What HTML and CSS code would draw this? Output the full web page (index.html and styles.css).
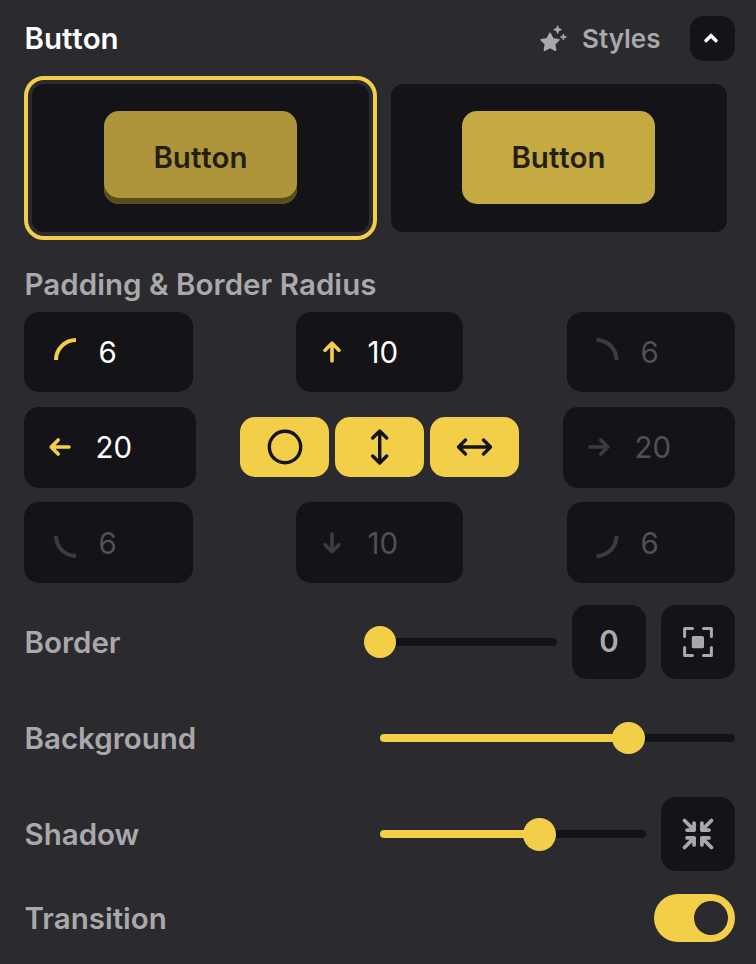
FILE: index.html
```html
<!DOCTYPE html>
<html lang="en">
<head>
<meta charset="utf-8">
<title>Button</title>
<link rel="stylesheet" href="styles.css">
</head>
<body>
<main class="panel">
  <header class="header">
    <h1 class="title">Button</h1>
    <div class="styles-link">
      <svg class="star" width="30" height="30" viewBox="0 0 30 30" fill="currentColor">
        <path d="M12 9.600l2.700 5.400 6 .9-4.300 4.200 1 6-5.400-2.900-5.400 2.900 1-6L3.300 15.900l6-.9z" stroke="currentColor" stroke-width="2" stroke-linejoin="round"/>
        <path d="M19.600 1.600l1.100 2.900 2.900 1.100-2.900 1.100-1.100 2.900-1.100-2.900-2.900-1.100 2.900-1.100zM25.400 10l.800 2.200 2.200 .800-2.200 .800-.800 2.200-.800-2.200-2.200-.800 2.200-.800z" stroke="currentColor" stroke-width=".8"/>
      </svg>
      <span>Styles</span>
    </div>
    <button class="collapse" aria-label="Collapse">
      <svg width="45" height="45" viewBox="0 0 45 45"><path d="M16.100 24.500l4.900-4.700 4.900 4.700" fill="none" stroke="currentColor" stroke-width="3.600" stroke-linecap="round"/></svg>
    </button>
  </header>

  <section class="previews">
    <div class="preview selected"><div class="preview-inner"><div class="sample raised">Button</div></div></div>
    <div class="preview"><div class="preview-inner"><div class="sample">Button</div></div></div>
  </section>

  <h2 class="label spacing-label">Padding &amp; Border Radius</h2>
  <section class="spacing">
    <div class="line">
      <div class="field corner"><svg width="24" height="24" viewBox="0 0 24 24"><path d="M3 24A20 20 0 0 1 23 4"/></svg><span>6</span></div>
      <div class="field vertical"><svg width="24" height="24" viewBox="0 0 24 24"><path d="M12 21V3.500M5 10.200l7-7 7 7"/></svg><span>10</span></div>
      <div class="field corner end muted"><svg width="24" height="24" viewBox="0 0 24 24"><path d="M.5 4A20 20 0 0 1 20.500 24"/></svg><span>6</span></div>
    </div>
    <div class="line middle">
      <div class="field side"><svg width="24" height="24" viewBox="0 0 24 24"><path d="M21 12H3.500M10.200 5l-7 7 7 7"/></svg><span>20</span></div>
      <div class="links">
        <div class="link"><svg width="40" height="40" viewBox="0 0 40 40"><circle cx="20" cy="20" r="15.700"/></svg></div>
        <div class="link"><svg width="40" height="40" viewBox="0 0 40 40"><path d="M19.700 4.500v31M12.700 11l7-7 7 7M12.700 29l7 7 7-7"/></svg></div>
        <div class="link"><svg width="40" height="40" viewBox="0 0 40 40"><path d="M4 20h31M10.500 13l-7 7 7 7M28.500 13l7 7-7 7"/></svg></div>
      </div>
      <div class="field side muted"><svg width="24" height="24" viewBox="0 0 24 24"><path d="M3 12h17.500M13.800 5l7 7-7 7"/></svg><span>20</span></div>
    </div>
    <div class="line last">
      <div class="field corner muted"><svg width="24" height="24" viewBox="0 0 24 24"><path d="M3 1A20 20 0 0 0 23 21"/></svg><span>6</span></div>
      <div class="field vertical muted"><svg width="24" height="24" viewBox="0 0 24 24"><path d="M12 3v17.500M5 13.800l7 7 7-7"/></svg><span>10</span></div>
      <div class="field corner end muted"><svg width="24" height="24" viewBox="0 0 24 24"><path d="M20.500 1A20 20 0 0 1 .5 21"/></svg><span>6</span></div>
    </div>
  </section>

  <section class="row border-row">
    <span class="label">Border</span>
    <div class="controls">
      <div class="slider" style="--value:0%"><i class="fill"></i><i class="knob"></i></div>
      <div class="box number">0</div>
      <div class="box"><svg width="32" height="32" viewBox="0 0 32 32"><path d="M2.600 10.500V2.600h7.900M21.500 2.600h7.900v7.900M29.400 21.500v7.900h-7.900M10.500 29.400H2.600v-7.900" fill="none" stroke="currentColor" stroke-width="3" stroke-linecap="round" stroke-linejoin="round"/><rect x="9.800" y="10" width="12.200" height="12.200" rx="1.500" fill="currentColor"/></svg></div>
    </div>
  </section>
  <section class="row background-row">
    <span class="label">Background</span>
    <div class="controls"><div class="slider" style="--value:70%"><i class="fill"></i><i class="knob"></i></div></div>
  </section>
  <section class="row shadow-row">
    <span class="label">Shadow</span>
    <div class="controls">
      <div class="slider" style="--value:60%"><i class="fill"></i><i class="knob"></i></div>
      <div class="box"><svg width="32" height="32" viewBox="0 0 32 32" fill="none" stroke="currentColor" stroke-width="3.700" stroke-linecap="round" stroke-linejoin="round"><path d="M2.500 2.500l9.600 9.600M12.100 5v7.100H5M29.500 2.500l-9.600 9.600M19.900 5v7.100H27M2.500 29.500l9.600-9.600M12.100 27v-7.100H5M29.500 29.500l-9.600-9.600M19.900 27v-7.100H27"/></svg></div>
    </div>
  </section>
  <section class="row transition-row">
    <span class="label">Transition</span>
    <div class="switch"><i></i></div>
  </section>
</main>
</body>
</html>
```
FILE: styles.css
```css
* { box-sizing: border-box; }
body {
  margin: 0;
  background: #2b2a2f;
  color: #a9a9ab;
  font: 600 29.5px/36px Inter, sans-serif;
}
svg { display: block; flex: none; }
.panel { width: 756px; height: 964px; padding: 16px 21px 0 24px; overflow: hidden; }
.header { display: flex; align-items: center; height: 45px; }
.title { margin: 0 0 2px; padding-left: .5px; font-size: inherit; font-weight: inherit; font-kerning: none; letter-spacing: -.05px; color: #fff; }
.styles-link { display: flex; align-items: center; gap: 14px; margin-left: auto; font-size: 26px; }
.collapse {
  width: 45px; height: 45px; margin-left: 29.5px; padding: 0;
  border: 0; border-radius: 14px; background: #141318; color: #fff;
}
.previews { display: flex; gap: 6px; margin-top: 15px; }
.preview { height: 164px; padding: 4px; border: 4px solid transparent; border-radius: 20px; width: 352px; flex: none; }
.preview.selected { width: 353px; border-color: #f3ce49; }
.preview-inner {
  display: flex; height: 148px; padding: 27px 0 0 71px;
  border-radius: 12px; background: #141318;
}
.selected .preview-inner { padding-left: 72px; }
.sample {
  width: 193px; height: 93px; border-radius: 15px;
  background: #c5a941; color: #241f0a; line-height: 93px; text-align: center;
  font-kerning: none; letter-spacing: -.05px;
}
.sample.raised { background: #ae953b; box-shadow: inset 0 -6px #594d20; }
.label { margin: 0; padding-left: .5px; font-size: inherit; font-weight: inherit; }
.row .label { padding-bottom: 1px; }
.spacing-label { margin-top: 26px; letter-spacing: .04px; }
.spacing { display: flex; flex-direction: column; margin-top: 10px; }
.line { display: flex; justify-content: space-between; }
.middle { margin-top: 15px; align-items: center; }
.last { margin-top: 14px; }
.field {
  display: flex; align-items: center; height: 80px; border-radius: 15px;
  background: #141318; color: #fff; font-weight: 400;
}
.middle .field, .last .field { height: 81px; }
.middle .field { padding-bottom: 2px; }
.field svg { fill: none; stroke: #f3ce49; stroke-width: 3.6; stroke-linecap: round; stroke-linejoin: round; }
.corner { width: 169px; padding-left: 29px; gap: 21.5px; }
.corner.end { width: 168px; gap: 20.5px; }
.corner svg { stroke-width: 4; stroke-linecap: butt; margin-top: -8px; }
.last .corner svg { margin-top: 9px; }
.last .field span, .middle .field span { padding-top: 1px; }
.vertical { width: 167px; padding-left: 24px; gap: 23.5px; margin-right: 1px; }
.side { width: 172px; padding-left: 24px; gap: 23.5px; }
.muted { color: #505055; }
.muted svg { stroke: #3c3b40; }
.links { display: flex; gap: 6px; height: 60px; margin-bottom: 1px; }
.link {
  display: flex; align-items: center; justify-content: center;
  width: 89px; height: 60px; border-radius: 15px; background: #f3ce49;
}
.link svg { fill: none; stroke: #141318; stroke-width: 3.4; stroke-linecap: round; stroke-linejoin: round; }
.row { display: flex; align-items: center; justify-content: space-between; height: 74px; }
.border-row { margin-top: 22px; }
.background-row, .shadow-row { margin-top: 22px; }
.transition-row { margin-top: 10px; }
.controls { display: flex; align-items: center; gap: 15px; width: 355px; }
.slider { position: relative; flex: 1; height: 8px; border-radius: 4px; background: #141318; }
.fill { display: block; width: var(--value); height: 8px; border-radius: 4px; background: #f3ce49; }
.knob {
  position: absolute; left: var(--value); top: -12px; width: 33px; height: 33px;
  margin-left: -16.5px; border-radius: 50%; background: #f3ce49;
}
.border-row .knob, .background-row .knob { height: 32px; }
.border-row .knob { width: 32px; margin-left: -16px; }
.box {
  display: flex; align-items: center; justify-content: center; flex: none;
  width: 74px; height: 74px; border-radius: 15px; background: #141318;
}
.number { padding-bottom: 2px; }
.switch { display: flex; align-items: center; justify-content: flex-end; width: 81px; height: 48px; padding-right: 7px; border-radius: 24px; background: #f3ce49; }
.switch i { width: 34px; height: 34px; border-radius: 50%; background: #2b2a2f; }
```
